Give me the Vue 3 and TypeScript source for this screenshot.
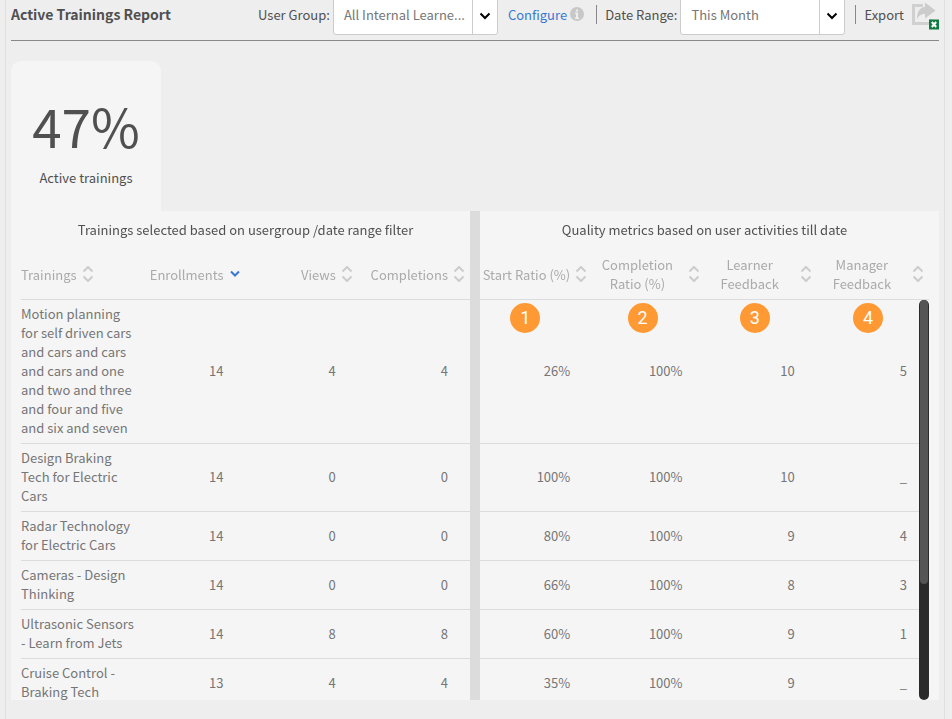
<script setup lang="ts">
import { ref } from 'vue'

interface Column {
  key: string
  label: string
  sorted?: boolean
}

interface Training {
  name: string
  selected: string[]
  metrics: string[]
}

interface Marker {
  id: number
  right: number
}

const selectedColumns: Column[] = [
  { key: 'trainings', label: 'Trainings' },
  { key: 'enrollments', label: 'Enrollments', sorted: true },
  { key: 'views', label: 'Views' },
  { key: 'completions', label: 'Completions' },
]

const metricColumns: Column[] = [
  { key: 'start', label: 'Start Ratio (%)' },
  { key: 'completion', label: 'Completion Ratio (%)' },
  { key: 'learner', label: 'Learner Feedback' },
  { key: 'manager', label: 'Manager Feedback' },
]

const trainings: Training[] = [
  {
    name: 'Motion planning for self driven cars and cars and cars and cars and one and two and three and four and five and six and seven',
    selected: ['14', '4', '4'],
    metrics: ['26%', '100%', '10', '5'],
  },
  { name: 'Design Braking Tech for Electric Cars', selected: ['14', '0', '0'], metrics: ['100%', '100%', '10', '_'] },
  { name: 'Radar Technology for Electric Cars', selected: ['14', '0', '0'], metrics: ['80%', '100%', '9', '4'] },
  { name: 'Cameras - Design Thinking', selected: ['14', '0', '0'], metrics: ['66%', '100%', '8', '3'] },
  { name: 'Ultrasonic Sensors - Learn from Jets', selected: ['14', '8', '8'], metrics: ['60%', '100%', '9', '1'] },
  { name: 'Cruise Control - Braking Tech', selected: ['13', '4', '4'], metrics: ['35%', '100%', '9', '_'] },
]

// Numbered call-outs over the first row, measured from the right edge of each metric column.
const markers: Marker[] = [
  { id: 1, right: 52 },
  { id: 2, right: 47 },
  { id: 3, right: 47 },
  { id: 4, right: 46 },
]

const userGroup = ref('internal')
const dateRange = ref('month')
</script>

<template>
  <main class="page">
    <section class="report">
      <header class="toolbar">
        <h1>Active Trainings Report</h1>
        <div class="filters">
          <label for="user-group">User Group:</label>
          <div class="picker">
            <select id="user-group" v-model="userGroup">
              <option value="internal">All Internal Learne...</option>
            </select>
            <svg class="caret" viewBox="0 0 12 8" aria-hidden="true"><path d="M1.5 1.5 6 6l4.500-4.500" /></svg>
          </div>
          <a class="configure" href="#configure">Configure</a>
          <svg class="info" viewBox="0 0 14 14" aria-hidden="true">
            <circle cx="7" cy="7" r="7" />
            <path d="M6 2.500h2v2H6zM5 5.500h3v5h1V12H5v-1.500h1V7H5z" />
          </svg>
          <span class="divider"></span>
          <label for="date-range">Date Range:</label>
          <div class="picker">
            <select id="date-range" v-model="dateRange">
              <option value="month">This Month</option>
            </select>
            <svg class="caret" viewBox="0 0 12 8" aria-hidden="true"><path d="M1.5 1.5 6 6l4.500-4.500" /></svg>
          </div>
          <span class="divider"></span>
          <button class="export" type="button">
            Export
            <svg viewBox="0 0 27 27" aria-hidden="true">
              <path class="frame" d="M11 4.500H1.500V22.500H19V18" />
              <path class="arrow" d="M13 1.500 23.500 9.500 13 17.500V13c-4 0-6 1.500-8 5C5 11 7.500 6.500 13 6z" />
              <rect class="sheet" x="17" y="18.500" width="10" height="10" />
              <path class="cross" d="m19.800 21 4.400 5m0-5-4.400 5" />
            </svg>
          </button>
        </div>
      </header>

      <div class="summary">
        <strong>47%</strong>
        <span>Active trainings</span>
      </div>

      <div class="panel">
        <div class="scroller">
          <table>
            <colgroup>
              <col v-for="c in selectedColumns" :key="c.key" />
              <col class="gutter-col" />
              <col v-for="c in metricColumns" :key="c.key" />
            </colgroup>
            <thead>
              <tr class="groups">
                <th colspan="4" scope="colgroup">Trainings selected based on usergroup /date range filter</th>
                <td class="gutter"></td>
                <th colspan="4" scope="colgroup">Quality metrics based on user activities till date</th>
              </tr>
              <tr class="columns">
                <th v-for="c in selectedColumns" :key="c.key" scope="col">
                  <button type="button" :class="{ first: c.key === 'trainings' }">
                    <span>{{ c.label }}</span>
                    <svg v-if="c.sorted" class="sorted" viewBox="0 0 12 16" aria-hidden="true"><path d="m2 5.500 4 4 4-4" /></svg>
                    <svg v-else viewBox="0 0 12 16" aria-hidden="true"><path d="m1.500 5.500 4.500-4.500 4.500 4.500M1.500 10.500 6 15l4.500-4.500" /></svg>
                  </button>
                </th>
                <td class="gutter"></td>
                <th v-for="c in metricColumns" :key="c.key" scope="col">
                  <button type="button">
                    <span>{{ c.label }}</span>
                    <svg viewBox="0 0 12 16" aria-hidden="true"><path d="m1.500 5.500 4.500-4.500 4.500 4.500M1.500 10.500 6 15l4.500-4.500" /></svg>
                  </button>
                </th>
              </tr>
            </thead>
            <tbody>
              <tr v-for="(t, row) in trainings" :key="t.name">
                <th scope="row"><span class="name">{{ t.name }}</span></th>
                <td v-for="(v, i) in t.selected" :key="i">{{ v }}</td>
                <td class="gutter"></td>
                <td v-for="(v, i) in t.metrics" :key="i">
                  {{ v }}
                  <span v-if="row === 0" class="marker" :style="{ right: markers[i].right + 'px' }">{{ markers[i].id }}</span>
                </td>
              </tr>
            </tbody>
          </table>
        </div>
        <div class="scrollbar" aria-hidden="true"><div class="thumb"></div></div>
      </div>
    </section>
  </main>
</template>

<style>
body {
  margin: 0;
  background: #eee;
}
</style>

<style scoped>
.page {
  box-sizing: border-box;
  height: 100vh;
  padding: 0 7px 0 5px;
  font-family: "Noto Sans CJK SC", "Noto Sans", sans-serif;
  font-size: 13px;
  line-height: 19px;
  color: #505050;
}

.report {
  box-sizing: border-box;
  display: flex;
  flex-direction: column;
  height: 100%;
  padding: 0 5px 19px;
  border: solid #e0e0e0;
  border-width: 0 1px;
}

.toolbar {
  display: flex;
  align-items: center;
  height: 28px;
  padding-bottom: 12px;
  border-bottom: 1px solid #888;
  margin-bottom: 20px;
}

h1 {
  margin: 0;
  font-size: 14px;
  line-height: 20px;
  font-weight: 700;
  white-space: nowrap;
}

.filters {
  display: flex;
  align-items: center;
  margin-left: auto;
  white-space: nowrap;
}

.picker {
  position: relative;
  margin: 0 10px 0 3px;
}

select {
  display: block;
  appearance: none;
  box-sizing: border-box;
  width: 165px;
  height: 42px;
  padding: 0 30px 0 10px;
  border: 1px solid #ccc;
  border-radius: 3px;
  background: linear-gradient(#ccc, #ccc) right 24px top / 1px 100% no-repeat #fff;
  font: inherit;
  color: #767676;
}

.caret {
  position: absolute;
  right: 7px;
  top: 19px;
  width: 12px;
  height: 8px;
  fill: none;
  stroke: #000;
  stroke-width: 2;
  pointer-events: none;
}

.configure {
  color: #3a78d0;
  text-decoration: none;
}

.info {
  width: 14px;
  height: 14px;
  margin: 0 12px 0 3px;
  fill: #c8c8c8;
}

.info path {
  fill: #eee;
}

.divider {
  width: 1px;
  height: 19px;
  margin-right: 8px;
  background: #888;
}

.export {
  display: flex;
  align-items: center;
  gap: 8px;
  padding: 0;
  border: 0;
  background: none;
  font: inherit;
  color: inherit;
}

.export svg {
  width: 27px;
  height: 27px;
  overflow: visible;
}

.frame {
  fill: none;
  stroke: #d0d0d0;
  stroke-width: 3;
}

.arrow {
  fill: #ccc;
}

.sheet {
  fill: #107c41;
}

.cross {
  stroke: #fff;
  stroke-width: 2;
}

.summary {
  box-sizing: border-box;
  display: flex;
  flex-direction: column;
  align-items: center;
  align-self: flex-start;
  gap: 13px;
  width: 150px;
  height: 150px;
  padding-top: 34px;
  border-radius: 10px 10px 0 0;
  background: #f5f5f5;
}

.summary strong {
  font-size: 53px;
  line-height: 60px;
  font-weight: 400;
}

.panel {
  position: relative;
  flex: 1;
  min-height: 0;
  padding: 0 10px;
  background: #f5f5f5;
}

.scroller {
  height: 100%;
  overflow: auto;
  scrollbar-width: none;
}

table {
  width: 100%;
  table-layout: fixed;
  border-spacing: 0;
}

.gutter-col {
  width: 10px;
}

th,
td {
  padding: 0;
  font-weight: 400;
}

thead {
  position: sticky;
  top: 0;
  z-index: 1;
  background: #f5f5f5;
}

.groups th {
  height: 37px;
  padding-bottom: 2px;
}

.columns th {
  height: 48px;
  padding-bottom: 1px;
  border-bottom: 1px solid #dcdcdc;
}

.columns button {
  display: flex;
  align-items: center;
  justify-content: flex-end;
  gap: 5px;
  width: 100%;
  padding: 0 5px 0 0;
  border: 0;
  background: none;
  font: inherit;
  color: #aaa;
}

.columns .first {
  justify-content: flex-start;
}

.columns svg {
  flex: none;
  width: 12px;
  height: 16px;
  fill: none;
  stroke: #ccc;
  stroke-width: 2;
}

.columns .sorted {
  stroke: #3a78d0;
}

tbody th,
tbody td {
  position: relative;
  padding: 4px 22px 6px 0;
  border-bottom: 1px solid #dcdcdc;
  text-align: right;
  color: #767676;
}

tbody th {
  padding-right: 0;
  text-align: left;
}

/* Names may run slightly into the empty left side of the next column. */
.name {
  display: block;
  margin-right: -4px;
}

tbody td.gutter,
td.gutter {
  padding: 0;
  border: 0;
  background: #dcdcdc;
}

.marker {
  position: absolute;
  top: 3px;
  width: 30px;
  height: 30px;
  border-radius: 50%;
  background: #ff9933;
  font: 18px/30px Roboto, sans-serif;
  text-align: center;
  color: #fff;
}

.scrollbar {
  position: absolute;
  z-index: 2;
  top: 89px;
  right: 10px;
  bottom: 0;
  width: 10px;
  border-radius: 5px;
  background: #2a2a2a;
}

.thumb {
  height: 71%;
  margin: 0 1px;
  border-radius: 4px;
  background: #555;
}
</style>
